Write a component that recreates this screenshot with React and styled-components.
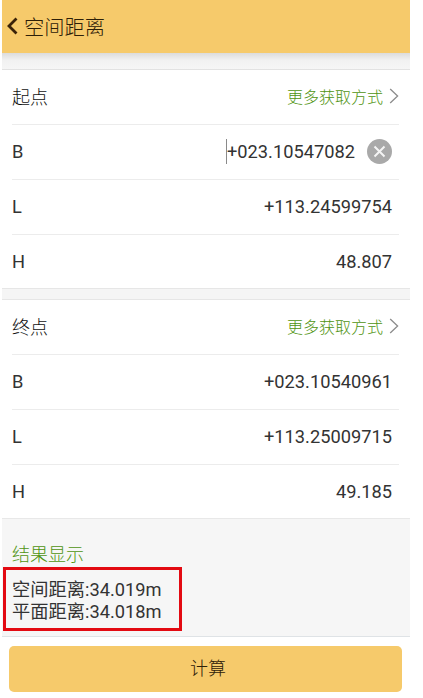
import React from "react";
import styled, { createGlobalStyle } from "styled-components";

const GlobalStyle = createGlobalStyle`
  html, body {
    margin: 0;
    padding: 0;
    background: #fff;
  }
  body {
    font-family: Roboto, "Noto Sans CJK SC", sans-serif;
    color: #333;
  }
`;

const Page = styled.div`
  width: 408px;
  height: 698px;
  margin-left: 2px;
  display: flex;
  flex-direction: column;
  overflow: hidden;
`;

const Header = styled.header`
  height: 53px;
  flex: none;
  background: #f6ca6b;
  display: flex;
  align-items: center;
  padding: 0 0 2px 4px;
  box-sizing: border-box;
  gap: 5px;
  font-size: 20.3px;
  font-weight: 300;
  color: #2e2008;
`;

const TopShade = styled.div`
  height: 17px;
  flex: none;
  background: linear-gradient(#dcdcdc, #f1f1f1 45%, #f6f6f6);
  border-bottom: 1px solid #e2e2e2;
  box-sizing: border-box;
`;

const Section = styled.section`
  background: #fff;
  padding-left: 10px;
  padding-right: 11px;
  flex: none;
`;

const Row = styled.div`
  height: ${(p) => (p.$last ? "53px" : "55px")};
  box-sizing: border-box;
  display: flex;
  align-items: center;
  justify-content: space-between;
  font-size: 18.25px;
  border-bottom: ${(p) => (p.$last ? "0" : "1px solid #ececec")};
  padding-right: ${(p) => (p.$flush ? "0" : "7px")};
  padding-bottom: ${(p) => (p.$last ? "0" : "2px")};
`;

const SectionTitle = styled.span`
  font-size: 18px;
  font-weight: 300;
  color: #111;
`;

const MoreLink = styled.span`
  display: flex;
  align-items: center;
  gap: 6px;
  font-size: 16px;
  font-weight: 300;
  color: #4f9410;
`;

const Value = styled.div`
  display: flex;
  align-items: center;
`;

const Caret = styled.span`
  width: 1px;
  height: 25px;
  background: #8a8a8a;
`;

const ClearButton = styled.span`
  width: 25px;
  height: 25px;
  margin-left: 12px;
  border-radius: 50%;
  background: #a9a9a9;
  display: flex;
  align-items: center;
  justify-content: center;
`;

const Divider = styled.div`
  height: 12px;
  flex: none;
  box-sizing: border-box;
  background: #f5f5f5;
  border-top: 1px solid #e6e6e6;
  border-bottom: 1px solid #e6e6e6;
`;

const Result = styled.section`
  flex: none;
  height: 119px;
  box-sizing: border-box;
  background: #f6f6f6;
  border-top: 1px solid #e8e8e8;
  border-bottom: 1px solid #dfe3e6;
  padding-top: 25px;
`;

const ResultTitle = styled.div`
  font-size: 18px;
  font-weight: 300;
  line-height: 22px;
  color: #4f9410;
  padding-left: 10px;
`;

const Highlight = styled.div`
  width: 179px;
  height: 64px;
  box-sizing: border-box;
  margin: 1px 0 0 1px;
  border: 3px solid #e30a12;
  padding: 9px 0 0 6px;
  font-size: 18.25px;
  line-height: 22px;
  color: #333;
`;

const Footer = styled.div`
  flex: 1;
  padding: 9px 8px 0 7px;
`;

const CalcButton = styled.button`
  width: 100%;
  height: 46px;
  border: 0;
  border-radius: 5px;
  padding: 0 0 4px 5px;
  background: #f6ca6b;
  color: #2e2008;
  font-family: inherit;
  font-weight: 300;
  font-size: 18px;
`;

const BackIcon = () => (
  <svg width="13" height="20" viewBox="0 0 13 20" fill="none">
    <path d="M10.5 2.5 3 10l7.5 7.5" stroke="#3a2208" strokeWidth="2.8" />
  </svg>
);

const ChevronIcon = () => (
  <svg width="10" height="16" viewBox="0 0 10 16" fill="none">
    <path d="M1.2 1 8.6 8l-7.4 7" stroke="#8c8c8c" strokeWidth="1.3" />
  </svg>
);

const ClearIcon = () => (
  <svg width="13" height="13" viewBox="0 0 13 13" fill="none">
    <path d="M1.5 1.5l10 10M11.5 1.5l-10 10" stroke="#f4f4f4" strokeWidth="2" />
  </svg>
);

const CoordSection = ({ title, children }) => (
  <Section>
    <Row $flush>
      <SectionTitle>{title}</SectionTitle>
      <MoreLink>
        更多获取方式
        <ChevronIcon />
      </MoreLink>
    </Row>
    {children}
  </Section>
);

const App = () => (
  <>
    <GlobalStyle />
    <Page>
      <Header>
        <BackIcon />
        空间距离
      </Header>
      <TopShade />
      <CoordSection title="起点">
        <Row>
          <span>B</span>
          <Value>
            <Caret />
            +023.10547082
            <ClearButton>
              <ClearIcon />
            </ClearButton>
          </Value>
        </Row>
        <Row>
          <span>L</span>
          <span>+113.24599754</span>
        </Row>
        <Row $last>
          <span>H</span>
          <span>48.807</span>
        </Row>
      </CoordSection>
      <Divider />
      <CoordSection title="终点">
        <Row>
          <span>B</span>
          <span>+023.10540961</span>
        </Row>
        <Row>
          <span>L</span>
          <span>+113.25009715</span>
        </Row>
        <Row $last>
          <span>H</span>
          <span>49.185</span>
        </Row>
      </CoordSection>
      <Result>
        <ResultTitle>结果显示</ResultTitle>
        <Highlight>
          空间距离:34.019m
          <br />
          平面距离:34.018m
        </Highlight>
      </Result>
      <Footer>
        <CalcButton>计算</CalcButton>
      </Footer>
    </Page>
  </>
);

export default App;
